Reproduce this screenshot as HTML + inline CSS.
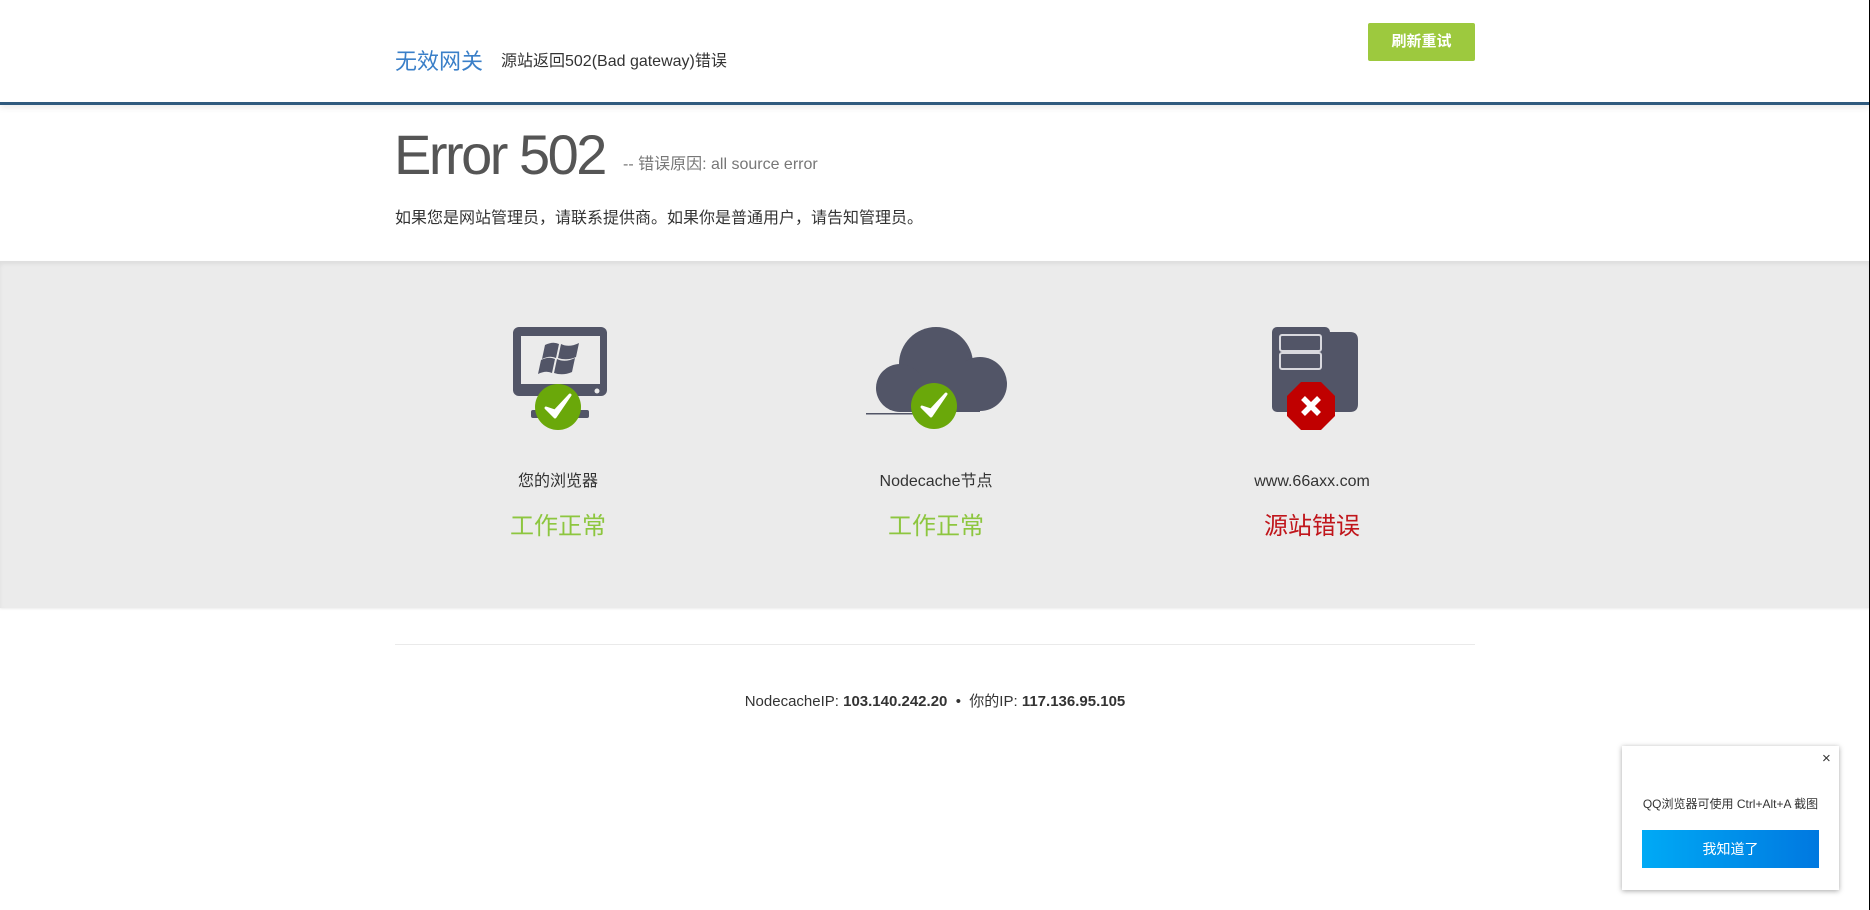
<!DOCTYPE html>
<html><head><meta charset="utf-8"><style>
*{margin:0;padding:0;box-sizing:border-box}
body{width:1870px;height:910px;overflow:hidden;background:#fff;font-family:"Liberation Sans","Noto Sans CJK SC",sans-serif;color:#333;position:relative}
.abs{position:absolute;white-space:nowrap}
#hdr{position:absolute;left:0;top:0;width:1870px;height:105px;border-bottom:3px solid #2f5a7e;box-shadow:0 3px 6px rgba(0,0,0,.08)}
#gray{position:absolute;left:0;top:261px;width:1870px;height:347px;background:#ebebeb;box-shadow:inset 0 3px 4px rgba(0,0,0,.06), 0 1px 2px rgba(0,0,0,.08)}
.lbl{position:absolute;width:300px;text-align:center;font-size:16px;color:#333;line-height:20px}
.st{position:absolute;width:300px;text-align:center;font-size:24px;line-height:30px}
</style></head><body>
<div id="hdr"></div>
<div class="abs" style="left:395px;top:48px;font-size:22px;color:#3a7fc8;line-height:28px">无效网关</div>
<div class="abs" style="left:501px;top:52px;font-size:16px;color:#333;line-height:20px">源站返回502(Bad gateway)错误</div>
<div class="abs" style="left:1368px;top:23px;width:107px;height:38px;background:#9dc93e;border-radius:2px;color:#fff;font-size:15px;line-height:38px;text-align:center;font-weight:bold">刷新重试</div>

<div class="abs" style="left:394px;top:123px;font-size:56px;line-height:64px;color:#555;font-weight:300;letter-spacing:-2.5px">Error 502</div>
<div class="abs" style="left:623px;top:155px;font-size:16px;color:#777;line-height:20px">-- 错误原因: all source error</div>
<div class="abs" style="left:395px;top:209px;font-size:16px;color:#333;line-height:20px">如果您是网站管理员，请联系提供商。如果你是普通用户，请告知管理员。</div>

<div id="gray"></div>
<svg class="abs" style="left:0;top:0" width="1870" height="910">
 <rect x="513" y="327" width="94" height="69" rx="6" fill="#525567"/>
 <rect x="521" y="336" width="79" height="48" fill="#ebebeb"/>
 <circle cx="597" cy="391" r="2.5" fill="#ebebeb"/>
 <rect x="531" y="410" width="58" height="8" rx="2" fill="#525567"/>
 <path d="M545 345 q8 -4 14 -1 l-3 14 q-6 -3 -14 1z M561 344 q8 4 18 -1 l-3 14 q-9 4 -18 1z M541 360 q8 -4 14 -1 l-3 14 q-6 -3 -14 1z M557 359 q8 4 18 -1 l-3 14 q-9 4 -18 1z" fill="#525567"/>
 <circle cx="558" cy="407" r="23" fill="#6aa80a"/>
 <path d="M546 408 l9 9 l15 -22 l-15 16z" fill="#fff" stroke="#fff" stroke-width="3" stroke-linejoin="round"/>
 <circle cx="936" cy="364" r="37" fill="#525567"/>
 <circle cx="900" cy="388" r="24" fill="#525567"/>
 <circle cx="980" cy="384" r="27" fill="#525567"/>
 <rect x="900" y="380" width="80" height="32" fill="#525567"/>
 <rect x="866" y="413" width="50" height="1.5" fill="#525567"/>
 <circle cx="934" cy="406" r="23" fill="#6aa80a"/>
 <path d="M922 407 l9 9 l15 -22 l-15 16z" fill="#fff" stroke="#fff" stroke-width="3" stroke-linejoin="round"/>
 <path d="M1320 332 h30 q8 0 8 8 v64 q0 8 -8 8 h-30z" fill="#525567"/>
 <rect x="1272" y="327" width="58" height="85" rx="5" fill="#525567"/>
 <rect x="1280" y="335" width="41" height="16" rx="2" fill="none" stroke="#d8d8de" stroke-width="2"/>
 <rect x="1280" y="353" width="41" height="16" rx="2" fill="none" stroke="#d8d8de" stroke-width="2"/>
 <polygon points="1301,382 1321,382 1335,396 1335,416 1321,430 1301,430 1287,416 1287,396" fill="#c00000"/>
 <path d="M1303 398 l16 16 M1319 398 l-16 16" stroke="#fff" stroke-width="5.5"/>
</svg>
<div class="lbl" style="left:408px;top:472px">您的浏览器</div>
<div class="st" style="left:408px;top:512px;color:#8dc63f">工作正常</div>
<div class="lbl" style="left:786px;top:472px">Nodecache节点</div>
<div class="st" style="left:786px;top:512px;color:#8dc63f">工作正常</div>
<div class="lbl" style="left:1162px;top:472px">www.66axx.com</div>
<div class="st" style="left:1162px;top:512px;color:#c0151b">源站错误</div>

<div class="abs" style="left:395px;top:644px;width:1080px;height:1px;background:#eaeaea"></div>
<div class="abs" style="left:0;width:1870px;top:692px;text-align:center;font-size:15px;line-height:20px;color:#333">NodecacheIP: <b>103.140.242.20</b> &nbsp;•&nbsp; 你的IP: <b>117.136.95.105</b></div>

<div class="abs" style="left:1622px;top:746px;width:217px;height:144px;background:#fff;box-shadow:0 1px 5px rgba(0,0,0,.35)">
 <div class="abs" style="left:200px;top:4px;font-size:15px;color:#333">×</div>
 <div class="abs" style="left:0;width:217px;top:50px;text-align:center;font-size:12px;color:#333;line-height:16px">QQ浏览器可使用 Ctrl+Alt+A 截图</div>
 <div class="abs" style="left:20px;top:84px;width:177px;height:38px;background:linear-gradient(90deg,#00aaf5,#0078e0);color:#fff;font-size:14px;text-align:center;line-height:38px">我知道了</div>
</div>
<div class="abs" style="left:1869px;top:0;width:1px;height:910px;background:#000"></div>
</body></html>
